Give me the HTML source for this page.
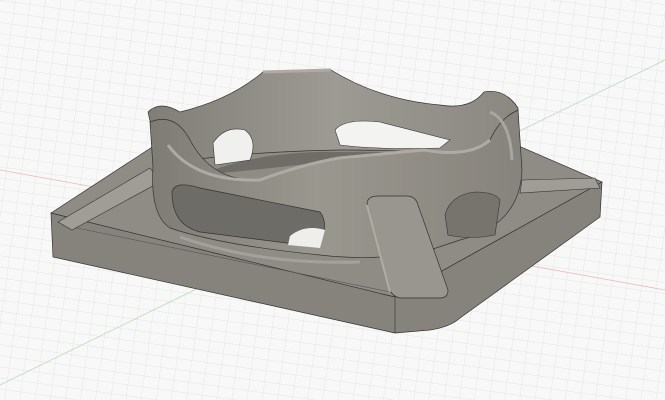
<!DOCTYPE html>
<html><head><meta charset="utf-8"><style>
html,body{margin:0;padding:0;width:665px;height:400px;overflow:hidden;background:#f8f8f8}
</style></head><body>
<svg width="665" height="400" viewBox="0 0 665 400" xmlns="http://www.w3.org/2000/svg">
<defs>
<pattern id="g" width="15" height="11" patternUnits="userSpaceOnUse" patternTransform="rotate(8)">
<path d="M0 0H15M0 0V11" stroke="#dedede" stroke-width="0.7" fill="none"/>
</pattern>
<linearGradient id="tw" x1="0" y1="0" x2="1" y2="0">
<stop offset="0" stop-color="#7e7c75"/><stop offset="0.45" stop-color="#9a978f"/><stop offset="1" stop-color="#86837c"/>
</linearGradient>
<linearGradient id="bk" x1="0" y1="0" x2="1" y2="0">
<stop offset="0" stop-color="#807e77"/><stop offset="0.5" stop-color="#9d9a93"/><stop offset="1" stop-color="#8a8881"/>
</linearGradient>
</defs>
<rect width="665" height="400" fill="#f8f8f8"/>
<rect width="665" height="400" fill="url(#g)"/>
<path d="M0 170 L665 290" stroke="#e8b8b8" stroke-width="0.8"/>
<path d="M0 385 L665 60" stroke="#b8dcb8" stroke-width="0.8"/>
<!-- base sides -->
<path d="M51 213 L53 257 L395 333 L430 330 Q450 327 460 318 L600 217 L602 182 L395 297 Z" fill="#86837c" stroke="#333" stroke-width="0.7"/>
<path d="M395 297 L395 333" stroke="#333" stroke-width="0.6"/>
<!-- base top -->
<path d="M51 213 L160 142 L470 125 L602 182 L395 297 Z" fill="#8f8c85" stroke="#333" stroke-width="0.7"/>
<path d="M62 225 L390 292" stroke="#555" stroke-width="0.6"/>
<!-- left rib -->
<path d="M58 222 L150 168 L160 182 L72 230 Z" fill="#a09d96" stroke="#333" stroke-width="0.6"/>
<!-- right rib -->
<path d="M522 180 L595 178 L600 188 L520 193 Z" fill="#a09d96" stroke="#333" stroke-width="0.6"/>
<!-- tower back inner wall -->
<path d="M148 112 Q160 100 180 112 Q230 100 263 72 L331 70 Q380 100 440 105 Q470 110 484 92 Q505 88 518 108 L520 165 Q470 150 340 150 Q230 152 160 165 Z" fill="url(#bk)" stroke="#333" stroke-width="0.7"/>
<!-- inner floor ring -->
<path d="M200 175 Q260 150 340 152 Q430 150 490 165 Q420 172 339 160 Q260 170 200 175 Z" fill="#6f6d67"/>
<!-- back holes -->
<path d="M213 143 Q225 125 245 130 Q258 140 250 160 L215 165 Z" fill="#f0f0ef" stroke="#333" stroke-width="0.6"/>
<path d="M335 130 Q345 118 380 122 L450 140 L440 148 Q380 150 340 145 Z" fill="#f3f3f2" stroke="#333" stroke-width="0.6"/>
<!-- tower front wall -->
<path d="M150 122 Q175 112 190 140 Q212 182 260 180 Q300 165 339 158 L424 150 Q470 158 490 140 Q500 118 518 110 L522 170 Q520 225 460 240 L430 250 Q380 262 320 255 Q220 245 170 228 Q150 215 153 167 Z" fill="url(#tw)" stroke="#333" stroke-width="0.7"/>
<!-- front holes -->
<path d="M172 192 Q175 180 200 188 L320 212 Q330 225 318 247 L200 232 Q172 225 172 192 Z" fill="#6e6c66" stroke="#333" stroke-width="0.7"/>
<path d="M290 236 Q305 224 325 230 L320 248 L288 245 Z" fill="#eeeeec"/>
<path d="M445 215 Q450 195 475 192 Q495 192 500 200 L495 235 Q470 240 448 235 Z" fill="#76746d" stroke="#333" stroke-width="0.6"/>
<!-- rim highlights -->
<path d="M168 145 Q195 182 260 180 Q300 165 339 158 L424 150 Q470 158 490 140" fill="none" stroke="#aeaba4" stroke-width="3"/>
<path d="M180 237 Q260 265 360 262" fill="none" stroke="#a4a19a" stroke-width="3"/>
<path d="M263 72 L331 70" stroke="#aeaba4" stroke-width="3"/>
<path d="M490 112 Q510 120 512 160" fill="none" stroke="#a9a69f" stroke-width="3"/>
<!-- front rib -->
<path d="M367 203 Q368 196 378 196 L408 196 Q416 197 418 205 L448 290 Q448 298 440 298 L400 298 Q392 296 390 290 Z" fill="#99968f" stroke="#333" stroke-width="0.7"/>
<path d="M367 205 L390 292" stroke="#b0ada6" stroke-width="2"/>
</svg>
</body></html>
